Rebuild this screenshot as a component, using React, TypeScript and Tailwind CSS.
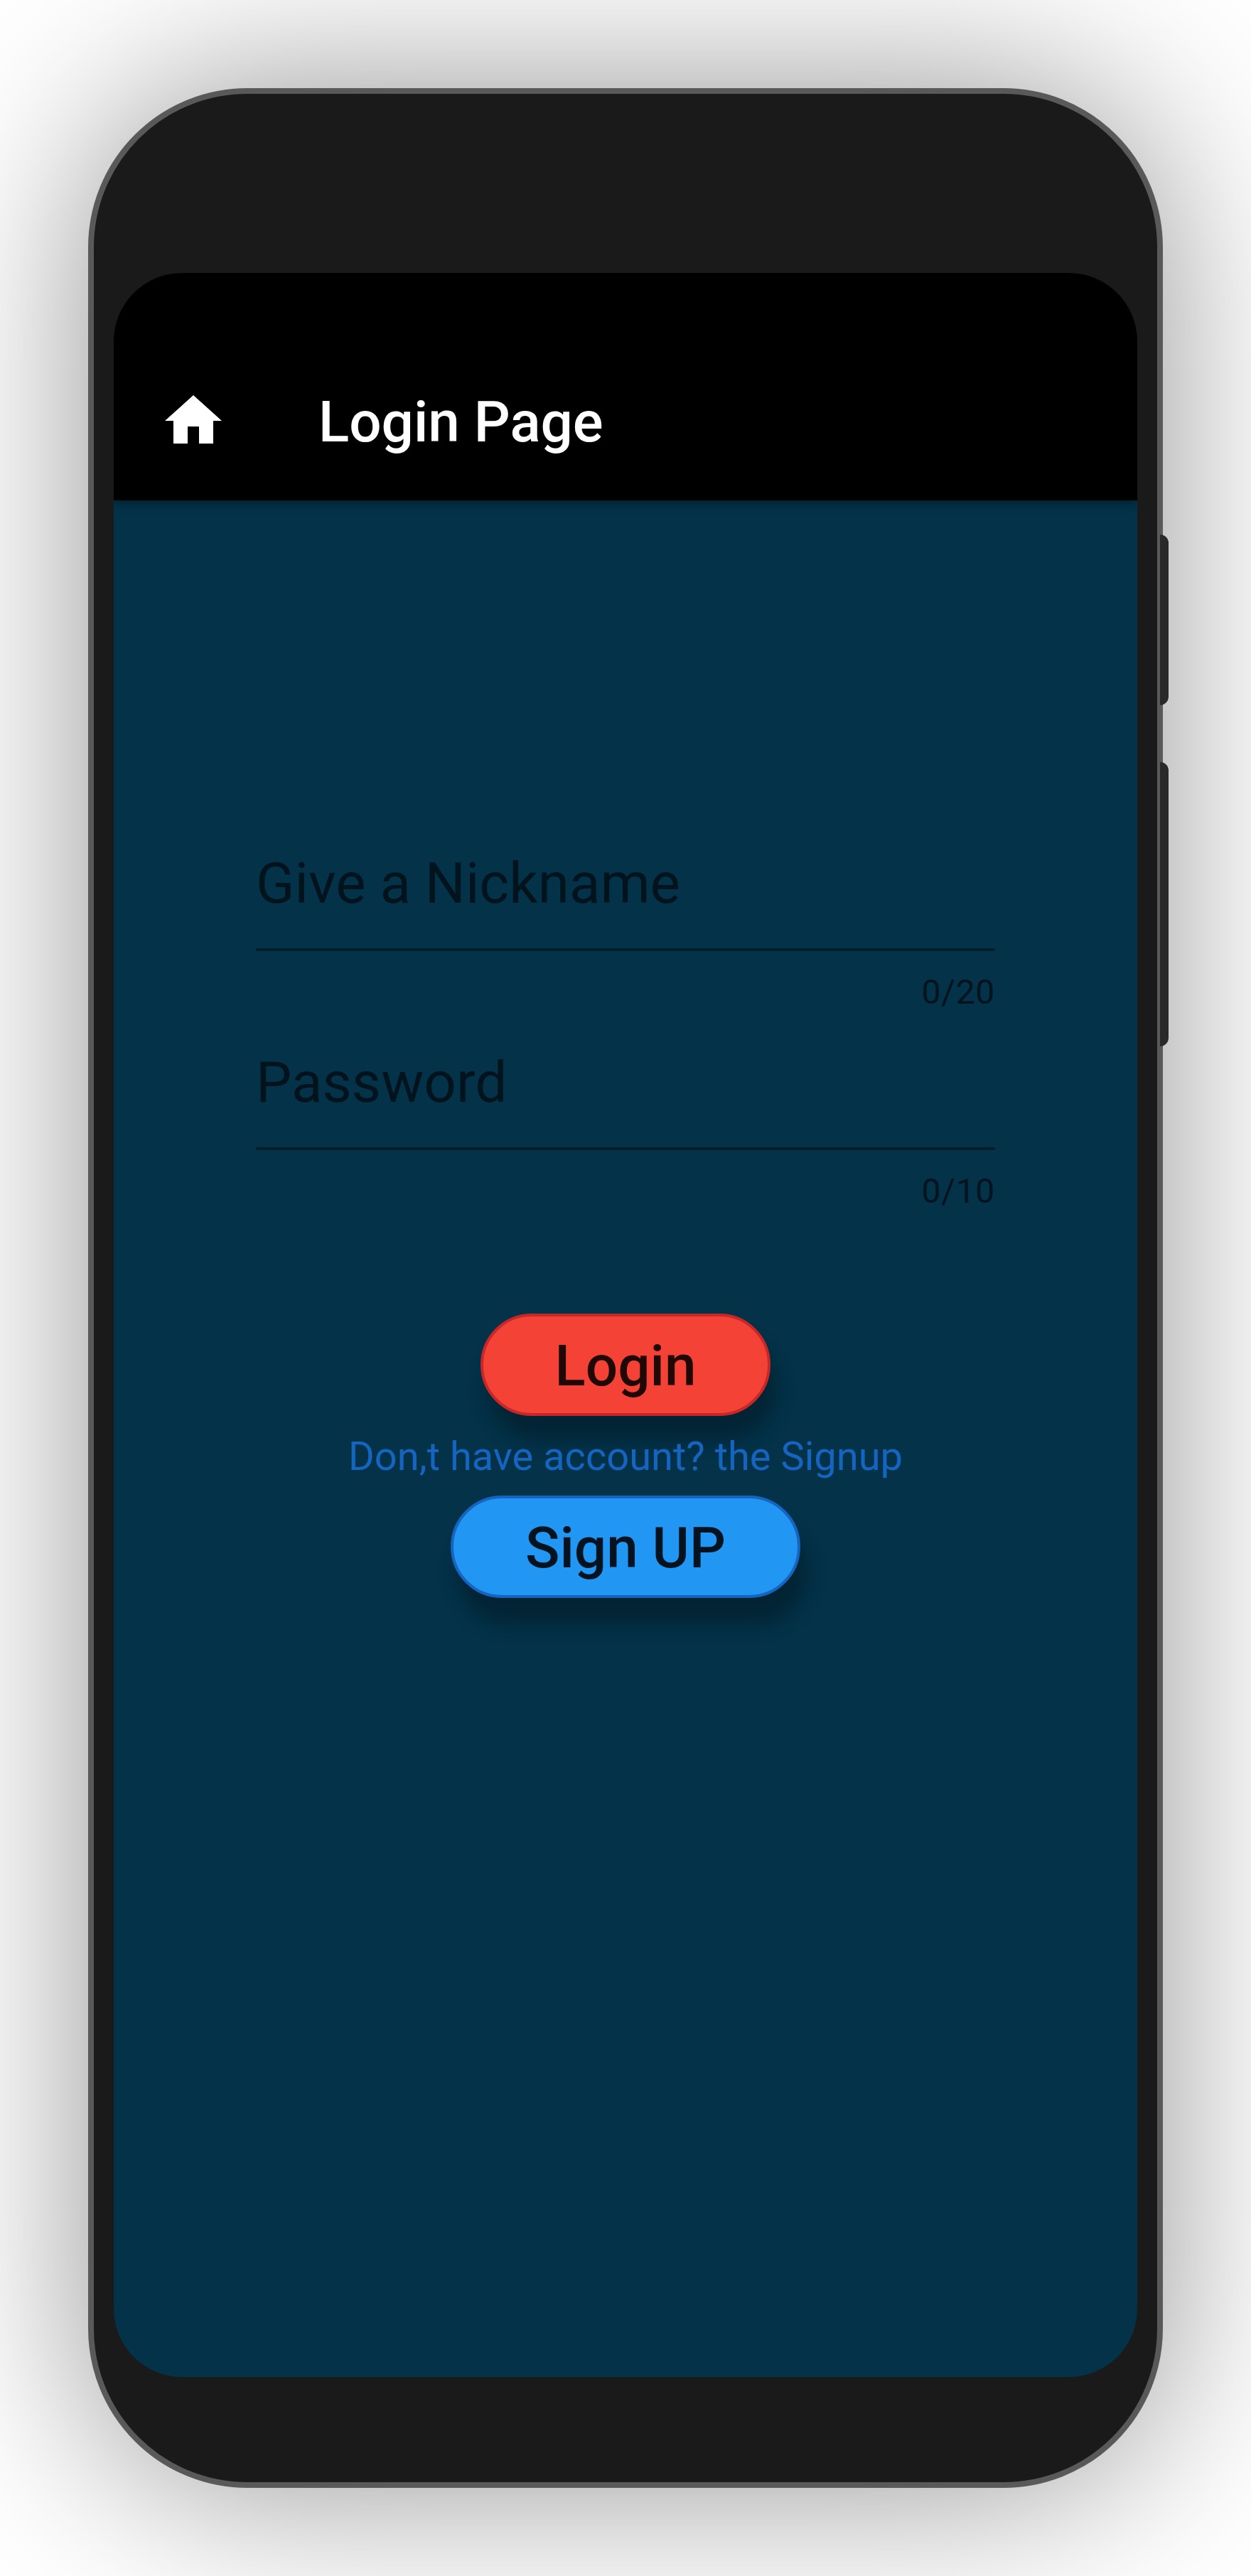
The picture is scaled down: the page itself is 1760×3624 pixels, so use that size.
type FieldProps = { label: string; counter: string };

function Field({ label, counter }: FieldProps) {
  return (
    <div className="flex h-[280px] w-full flex-col text-black/60">
      <div className="h-[142px] pt-1 text-[80px] leading-[94px]">{label}</div>
      <div className="h-1 shrink-0 bg-black/40" />
      <div className="pt-[30px] text-right text-[48px] leading-[56px] tracking-[0.7px]">{counter}</div>
    </div>
  );
}

export default function App() {
  return (
    <div className="flex h-[3624px] w-[1760px] flex-col overflow-hidden bg-white p-[124px] font-['Roboto',sans-serif]">
      <div className="relative h-[3376px] w-[1512px] rounded-[224px] border-8 border-[#595959] bg-[#1a1a1a] px-7 pt-[252px] shadow-[0_0_270px_rgba(0,0,0,0.43)]">
        <div className="absolute left-[1500px] top-[620px] h-60 w-3 rounded-r-[12px] bg-[#292929]" />
        <div className="absolute left-[1500px] top-[940px] h-[400px] w-3 rounded-r-[12px] bg-[#292929]" />
        <div className="flex h-[2960px] w-[1440px] flex-col overflow-hidden rounded-[96px] bg-[#033249]">
          <header className="flex h-80 shrink-0 items-center bg-black pl-16 pt-24 text-white shadow-[0_4px_12px_rgba(0,0,0,0.4)]">
            <svg viewBox="0 0 24 24" className="size-24 shrink-0" fill="currentColor">
              <path d="M10 20v-6h4v6h5v-8h3L12 3 2 12h3v8z" />
            </svg>
            <h1 className="ml-32 pt-1 text-[80px] font-medium leading-[94px]">Login Page</h1>
          </header>
          <main className="flex flex-col items-center px-[200px] pt-[488px]">
            <Field label="Give a Nickname" counter="0/20" />
            <Field label="Password" counter="0/10" />
            <button className="mt-24 h-36 w-[408px] shrink-0 rounded-full border-4 border-[#c62828] bg-[#f44336] pt-1 text-[80px] font-medium leading-[94px] text-black/87 shadow-[9px_33px_28px_rgba(0,0,0,0.29)]">
              Login
            </button>
            <p className="mt-6 h-16 whitespace-nowrap text-[56px] leading-[66px] text-[#1565c0]">
              Don,t have account? the Signup
            </p>
            <button className="mt-6 h-36 w-[492px] shrink-0 rounded-full border-4 border-[#1565c0] bg-[#2196f3] pt-1 text-[80px] font-medium leading-[94px] text-black/87 shadow-[10px_37px_28px_rgba(0,0,0,0.29)]">
              Sign UP
            </button>
          </main>
        </div>
      </div>
    </div>
  );
}
